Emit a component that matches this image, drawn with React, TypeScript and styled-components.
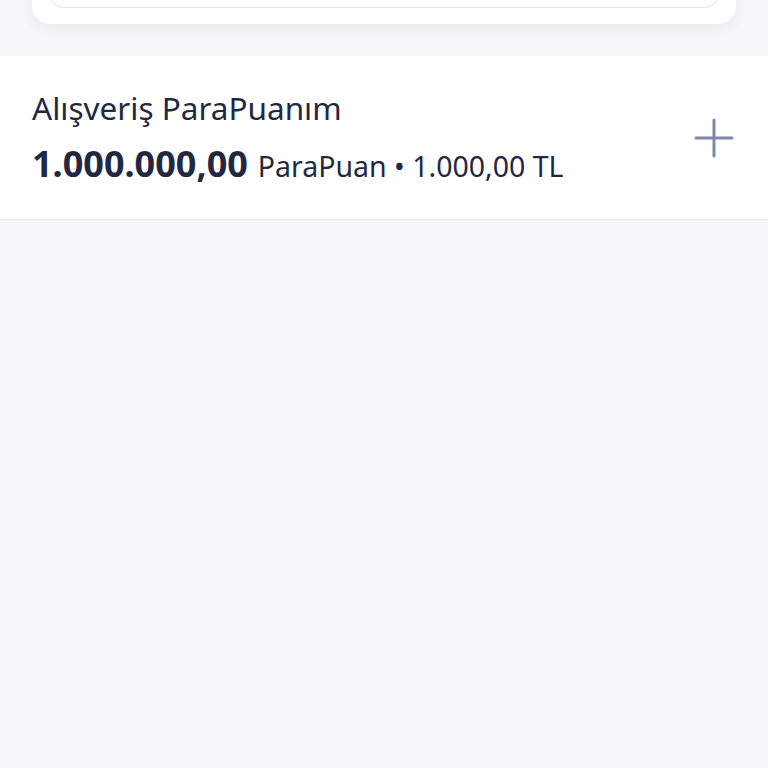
import React from 'react';
import styled, { createGlobalStyle } from 'styled-components';

const Global = createGlobalStyle`
  html, body {
    margin: 0;
    padding: 0;
    background: #f6f7f9;
    font-family: 'Noto Sans', sans-serif;
  }
`;

const Page = styled.div`
  width: 768px;
  min-height: 768px;
  background: #f6f7f9;
  overflow: hidden;
`;

const TopCard = styled.div`
  margin: -40px 32px 0;
  height: 64px;
  background: #ffffff;
  border-radius: 0 0 18px 18px;
  box-shadow: 0 6px 12px rgba(30, 40, 90, 0.05);
  padding: 0 16px;
  box-sizing: border-box;
`;

const InnerField = styled.div`
  height: 47px;
  border: 1.5px solid #e7e8ee;
  border-top: none;
  border-radius: 0 0 16px 16px;
  background: #fff;
`;

const Row = styled.div`
  margin-top: 32px;
  background: #ffffff;
  border-bottom: 1.5px solid #e4e4e7;
  height: 164px;
  padding: 0 34px 0 32px;
  display: flex;
  align-items: center;
  justify-content: space-between;
  box-sizing: border-box;
`;

const Info = styled.div`
  display: flex;
  flex-direction: column;
  gap: 16px;
  padding-bottom: 2px;
  color: #222842;
`;

const Title = styled.div`
  font-size: 31.5px;
  line-height: 40px;
`;

const Amount = styled.div`
  display: flex;
  align-items: baseline;
  gap: 10px;
  line-height: 40px;
`;

const Big = styled.span`
  font-size: 36px;
  font-weight: 700;
`;

const Small = styled.span`
  font-size: 28.5px;
`;

const PlusButton = styled.button`
  border: none;
  background: none;
  padding: 0;
  width: 40px;
  height: 40px;
  display: flex;
  align-items: center;
  justify-content: center;
`;

export default function App() {
  return (
    <Page>
      <Global />
      <TopCard>
        <InnerField />
      </TopCard>
      <Row>
        <Info>
          <Title>Alışveriş ParaPuanım</Title>
          <Amount>
            <Big>1.000.000,00</Big>
            <Small>ParaPuan • 1.000,00 TL</Small>
          </Amount>
        </Info>
        <PlusButton aria-label="Ekle">
          <svg width="40" height="40" viewBox="0 0 40 40">
            <path d="M20 2v36M2 20h36" stroke="#7f88a9" strokeWidth="3" strokeLinecap="round" />
          </svg>
        </PlusButton>
      </Row>
    </Page>
  );
}
